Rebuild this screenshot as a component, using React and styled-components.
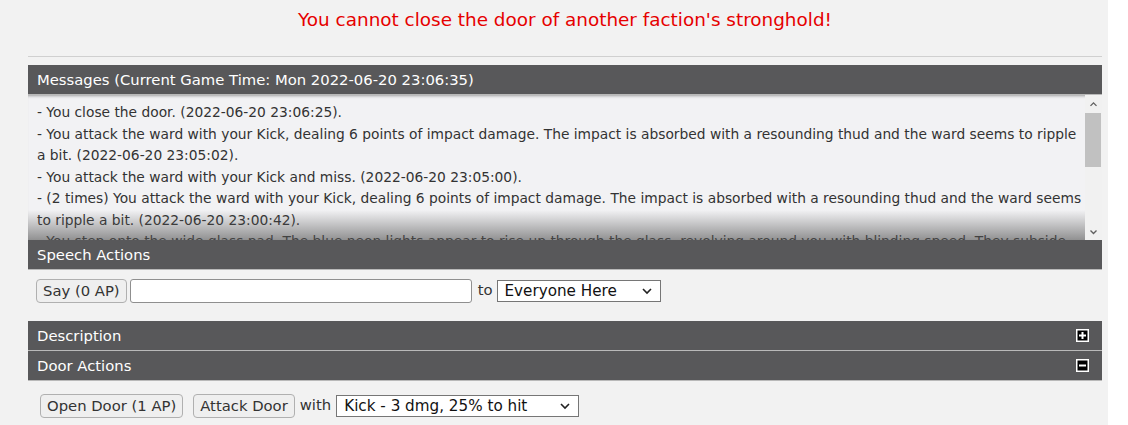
import React from "react";
import styled, { createGlobalStyle } from "styled-components";

const messages = [
  "- You close the door. (2022-06-20 23:06:25).",
  "- You attack the ward with your Kick, dealing 6 points of impact damage. The impact is absorbed with a resounding thud and the ward seems to ripple a bit. (2022-06-20 23:05:02).",
  "- You attack the ward with your Kick and miss. (2022-06-20 23:05:00).",
  "- (2 times) You attack the ward with your Kick, dealing 6 points of impact damage. The impact is absorbed with a resounding thud and the ward seems to ripple a bit. (2022-06-20 23:00:42).",
  "- You step onto the wide glass pad. The blue neon lights appear to rise up through the glass, revolving around you with blinding speed. They subside as you arrive. (2022-06-20 22:58:10).",
  "- You open the door. (2022-06-20 22:57:31).",
];

const App = () => {
  return (
    <>
      <GlobalStyle />
      <Page>
        <Notice>You cannot close the door of another faction's stronghold!</Notice>
        <Rule />

        <Panel>
          <Header>Messages (Current Game Time: Mon 2022-06-20 23:06:35)</Header>
          <MessageBox>
            <MessageText>
              {messages.map((m, i) => (
                <Message key={i}>{m}</Message>
              ))}
            </MessageText>
            <Scrollbar>
              <ScrollArrow>
                <Chevron up />
              </ScrollArrow>
              <Track>
                <Thumb />
              </Track>
              <ScrollArrow>
                <Chevron />
              </ScrollArrow>
            </Scrollbar>
          </MessageBox>
        </Panel>

        <Panel>
          <Header>Speech Actions</Header>
          <ActionRow>
            <Button type="button">Say (0 AP)</Button>
            <TextInput type="text" />
            <Word>to</Word>
            <SelectWrap width="164px">
              <Select defaultValue="here">
                <option value="here">Everyone Here</option>
              </Select>
              <Chevron select />
            </SelectWrap>
          </ActionRow>
        </Panel>

        <Header gap>
          Description
          <Toggle />
        </Header>
        <Header>
          Door Actions
          <Toggle open />
        </Header>
        <ActionRow door>
          <Button type="button" spaced>Open Door (1 AP)</Button>
          <Button type="button">Attack Door</Button>
          <Word tight>with</Word>
          <SelectWrap width="243px">
            <Select defaultValue="kick">
              <option value="kick">Kick - 3 dmg, 25% to hit</option>
            </Select>
            <Chevron select />
          </SelectWrap>
        </ActionRow>
      </Page>
    </>
  );
};

const Chevron = ({ up, select }) => (
  <ChevronSvg
    $select={select}
    width={select ? 12 : 9}
    height={select ? 8 : 6}
    viewBox="0 0 12 8"
  >
    <path
      d={up ? "M2 6.5 L6 2.5 L10 6.5" : "M2 2 L6 6 L10 2"}
      fill="none"
      stroke={select ? "#222" : "#606060"}
      strokeWidth={select ? 1.6 : 1.8}
    />
  </ChevronSvg>
);

const Toggle = ({ open }) => (
  <ToggleSvg width="13" height="13" viewBox="0 0 13 13">
    <rect x="0.75" y="0.75" width="11.5" height="11.5" fill="#000" stroke="#fff" strokeWidth="1.5" />
    <rect x="3" y="5.5" width="7" height="2" fill="#fff" />
    {!open && <rect x="5.5" y="3" width="2" height="7" fill="#fff" />}
  </ToggleSvg>
);

export default App;

const GlobalStyle = createGlobalStyle`
  html, body {
    margin: 0;
    background: #ffffff;
  }
  body {
    font-family: "DejaVu Sans", Verdana, sans-serif;
  }
`;

const Page = styled.div`
  width: 1108px;
  min-height: 425px;
  box-sizing: border-box;
  background: #f2f2f2;
  padding: 0 6px 0 28px;
`;

const Notice = styled.div`
  color: #e60000;
  font-size: 18.4px;
  line-height: 22px;
  text-align: center;
  padding-top: 9px;
  margin-bottom: 25px;
`;

const Rule = styled.div`
  height: 1px;
  background: #d0d0d0;
  margin-bottom: 8px;
`;

const Panel = styled.div`
  display: flex;
  flex-direction: column;
`;

const Header = styled.div`
  display: flex;
  align-items: center;
  justify-content: space-between;
  height: 29px;
  margin-top: ${(p) => (p.gap ? "1px" : "0")};
  padding: 0 13px 0 9px;
  background: #58585a;
  border-bottom: 1px solid #b9b9b9;
  color: #ffffff;
  font-size: 14.8px;
`;

const ToggleSvg = styled.svg`
  display: block;
`;

const MessageBox = styled.div`
  display: flex;
  height: 145px;
  background: #f2f2f4;
  box-shadow: inset 0 3px 3px -2px rgba(0, 0, 0, 0.35);
`;

const MessageText = styled.div`
  position: relative;
  flex: 1;
  overflow: hidden;
  padding: 7px 2px 0 9px;
  color: #333333;
  font-size: 13.8px;
  line-height: 21.5px;

  &::after {
    content: "";
    position: absolute;
    left: 0;
    right: 0;
    bottom: 0;
    height: 30px;
    background: linear-gradient(to bottom, rgba(80, 80, 80, 0), rgba(80, 80, 80, 0.6));
  }
`;

const Message = styled.div``;

const Scrollbar = styled.div`
  display: flex;
  flex-direction: column;
  width: 17px;
  background: #f1f1f1;
`;

const ScrollArrow = styled.div`
  display: flex;
  align-items: center;
  justify-content: center;
  height: 17px;
`;

const Track = styled.div`
  flex: 1;
  padding-top: 1px;
`;

const Thumb = styled.div`
  height: 54px;
  margin: 0 1px 0 0;
  background: #c1c1c1;
`;

const ChevronSvg = styled.svg`
  display: block;
  ${(p) => p.$select && `
    position: absolute;
    right: 8px;
    top: 50%;
    transform: translateY(-50%);
    pointer-events: none;
  `}
`;

const ActionRow = styled.div`
  display: flex;
  align-items: center;
  gap: ${(p) => (p.door ? "4px" : "3px")};
  padding: ${(p) => (p.door ? "13px 12px 0" : "9px 8px 17px")};
`;

const Button = styled.button`
  height: 24px;
  padding: 0 6px;
  margin-right: ${(p) => (p.spaced ? "6px" : "0")};
  background: #efefef;
  border: 1px solid #b0b0b0;
  border-radius: 4px;
  color: #333333;
  font-family: "DejaVu Sans", Verdana, sans-serif;
  font-size: 14.8px;
  line-height: 20px;
`;

const TextInput = styled.input`
  width: 342px;
  height: 24px;
  box-sizing: border-box;
  background: #ffffff;
  border: 1px solid #8f8f8f;
  border-radius: 3px;
  padding: 0 4px;
`;

const Word = styled.span`
  color: #333333;
  font-size: 14.8px;
  margin: ${(p) => (p.tight ? "0 1px 4px 1px" : "0 1px 4px 3px")};
`;

const SelectWrap = styled.div`
  position: relative;
  width: ${(p) => p.width};
`;

const Select = styled.select`
  appearance: none;
  width: 100%;
  height: 22px;
  box-sizing: border-box;
  background: #ffffff;
  border: 1px solid #767676;
  border-radius: 0;
  padding: 0 24px 0 7px;
  color: #111111;
  font-family: "DejaVu Sans", Verdana, sans-serif;
  font-size: 15.2px;
`;
